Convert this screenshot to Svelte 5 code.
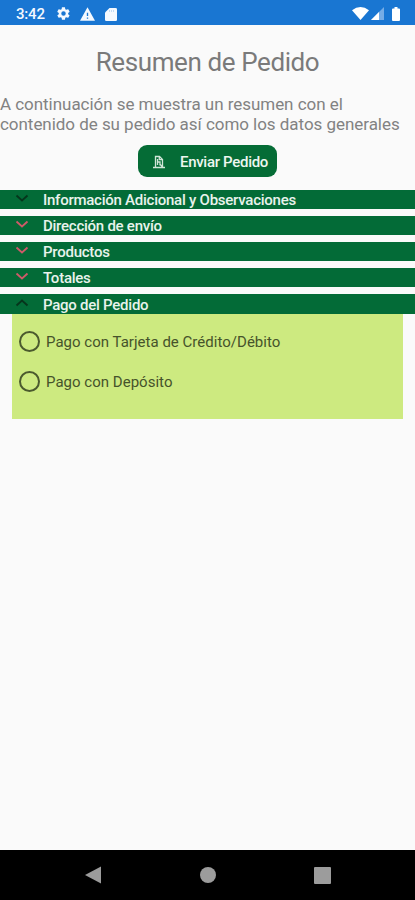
<script lang="ts">
	type Section = { title: string; accent: boolean };

	const sections: Section[] = [
		{ title: 'Información Adicional y Observaciones', accent: false },
		{ title: 'Dirección de envío', accent: true },
		{ title: 'Productos', accent: true },
		{ title: 'Totales', accent: true },
		{ title: 'Pago del Pedido', accent: false }
	];
	const payments = ['Pago con Tarjeta de Crédito/Débito', 'Pago con Depósito'];

	let open = $state(4);
	let selected = $state('');

	function toggle(index: number) {
		open = open === index ? -1 : index;
	}
</script>

<div class="screen">
	<header class="status-bar">
		<span class="clock">3:42</span>
		<svg class="gear" width="15" height="15" viewBox="0 0 24 24" fill="#f4f9ff">
			<path d="M19.4 13a7.5 7.5 0 0 0 0-2l2.1-1.6c.2-.2.3-.5.1-.7l-2-3.4c-.1-.2-.4-.3-.6-.2l-2.5 1a7 7 0 0 0-1.7-1l-.4-2.6c0-.3-.2-.5-.5-.5h-4c-.2 0-.5.2-.5.5L9 5.1a8 8 0 0 0-1.7 1l-2.5-1c-.2-.1-.5 0-.6.2l-2 3.4c-.1.2-.1.5.1.7L4.5 11a8 8 0 0 0 0 2l-2.2 1.6c-.2.2-.2.5-.1.7l2 3.4c.1.2.4.3.6.2l2.5-1c.5.4 1.100.8 1.7 1l.4 2.6c0 .3.3.5.5.5h4c.3 0 .5-.2.5-.5l.4-2.6c.6-.3 1.2-.6 1.7-1l2.5 1c.2.1.5 0 .6-.2l2-3.4c.1-.2.1-.5-.1-.7zM12 15.6a3.6 3.6 0 1 1 0-7.2 3.6 3.6 0 0 1 0 7.2z" />
		</svg>
		<svg class="warning" width="15" height="14" viewBox="0 0 22 20" fill="#f4f9ff">
			<path d="M0 20h22L11 0zM12 17h-2v-2h2zm0-4h-2V8h2z" />
		</svg>
		<svg class="card" width="12" height="14" viewBox="0 0 12 14" fill="#f4f9ff">
			<path d="M4.5 1H10.5Q12 1 12 2.3V12.7Q12 14 10.7 14H1.3Q0 14 0 12.7V5.5z" />
			<path d="M4.5 3v2M6.5 3v2M8.5 3v2" stroke="#b5d3f1" stroke-width=".8" />
		</svg>
		<span class="spacer"></span>
		<svg width="17" height="13" viewBox="0 0 17 13" fill="#fff">
			<path d="M0 3.2Q8.5-3 17 3.2L8.5 13z" />
		</svg>
		<svg class="signal" width="13" height="13" viewBox="0 0 13 13">
			<path d="M13 0v13H0z" fill="#75ace6" />
			<path d="M8 5v8H0z" fill="#fff" />
		</svg>
		<svg class="battery" width="8" height="14" viewBox="0 0 8 14" fill="#fff">
			<path d="M2.5 0h3v1.5H7q1 0 1 1V13q0 1-1 1H1q-1 0-1-1V2.5q0-1 1-1h1.5z" />
		</svg>
	</header>

	<main>
		<h1>Resumen de Pedido</h1>
		<p class="intro">
			A continuación se muestra un resumen con el<br />
			contenido de su pedido así como los datos generales
		</p>

		<button class="send">
			<svg width="14" height="14" viewBox="0 0 14 14" fill="none" stroke="#d0e5d7" stroke-width="1.3">
				<path d="M3.5 12V1.5h4l3 3V12M7.3 1.7v3h3M1 12.5h12M5.5 4v6M5.5 7h2.5v3.5M7.5 8.5l2.5 3" />
			</svg>
			<span>Enviar Pedido</span>
		</button>

		<div class="accordion">
			{#each sections as section, i}
				<button class="bar" onclick={() => toggle(i)}>
					<svg class:accent={section.accent} width="14" height="8" viewBox="0 0 14 8">
						<path d={open === i ? 'M1.5 6.5L7 1.5l5.5 5' : 'M1.5 1.5l5.500 5 5.500-5'} />
					</svg>
					<span class="label">{section.title}</span>
				</button>
			{/each}
			{#if open === 4}
				<div class="panel">
					{#each payments as payment}
						<label>
							<input type="radio" name="payment" value={payment} bind:group={selected} />
							<span>{payment}</span>
						</label>
					{/each}
				</div>
			{/if}
		</div>
	</main>

	<nav class="nav-bar">
		<svg width="16" height="18" viewBox="0 0 16 18"><path d="M16 .5v17L0 9z" /></svg>
		<svg width="16" height="16" viewBox="0 0 16 16"><circle cx="8" cy="8" r="8" /></svg>
		<svg width="17" height="17" viewBox="0 0 17 17"><rect width="17" height="17" rx="1" /></svg>
	</nav>
</div>

<style>
	:global(body) {
		background: #fafafa;
	}
	.screen {
		width: 415px;
		height: 900px;
		display: flex;
		flex-direction: column;
		overflow: hidden;
		background: #fafafa;
		font-family: Roboto, 'Liberation Sans', sans-serif;
	}
	.status-bar {
		height: 25px;
		box-sizing: border-box;
		padding: 2px 15px 0 16px;
		display: flex;
		align-items: center;
		background: #1976d2;
		color: #f4f9ff;
	}
	.clock {
		width: 40px;
		font-size: 15px;
		font-weight: 500;
		letter-spacing: -0.2px;
	}
	.warning {
		margin-left: 9px;
	}
	.card {
		margin-left: 10px;
	}
	.spacer {
		flex: 1;
	}
	.signal {
		margin-left: 2px;
	}
	.battery {
		margin-left: 8px;
	}
	main {
		flex: 1;
		display: flex;
		flex-direction: column;
	}
	h1 {
		margin: 20px 0 0;
		text-align: center;
		font-size: 26px;
		line-height: 34px;
		font-weight: 400;
		letter-spacing: -0.4px;
		color: #7a7a7a;
	}
	.intro {
		margin: 15px 0 0;
		white-space: nowrap;
		font-size: 17px;
		line-height: 20px;
		letter-spacing: -0.04px;
		color: #828282;
	}
	.send {
		align-self: center;
		width: 139px;
		height: 32px;
		margin-top: 11px;
		padding: 1px 0 0 14px;
		display: flex;
		align-items: center;
		gap: 14px;
		border: 0;
		border-radius: 9px;
		background: #056c36;
		color: #eef7f0;
		font: 500 15px Roboto, sans-serif;
		letter-spacing: -0.3px;
		white-space: nowrap;
	}
	.accordion {
		margin-top: 13px;
		display: flex;
		flex-direction: column;
	}
	.bar {
		height: 19px;
		margin-bottom: 7px;
		padding: 0 0 0 15px;
		display: flex;
		align-items: center;
		gap: 14px;
		border: 0;
		background: #036b37;
		color: #e9f3ec;
		font: 500 15px Roboto, sans-serif;
		letter-spacing: -0.25px;
		text-align: left;
	}
	.bar:last-of-type {
		height: 20px;
		margin-bottom: 0;
	}
	.bar svg {
		fill: none;
		stroke: #06351c;
		stroke-width: 1.8;
		margin-bottom: 3px;
	}
	.bar svg.accent {
		stroke: #cf5a69;
	}
	.label {
		line-height: 19px;
		padding-top: 2px;
	}
	.panel {
		height: 105px;
		box-sizing: border-box;
		margin: 0 12px;
		padding: 7px 0 0 7px;
		background: #cdea80;
	}
	label {
		height: 40px;
		display: flex;
		align-items: center;
		gap: 6px;
		font-size: 15px;
		letter-spacing: 0.02px;
		color: #46532b;
	}
	label span {
		padding-top: 2px;
	}
	input {
		appearance: none;
		width: 21px;
		height: 21px;
		margin: 0;
		border: 2px solid #4b5a2e;
		border-radius: 50%;
	}
	input:checked {
		background: radial-gradient(#4b5a2e 45%, transparent 50%);
	}
	.nav-bar {
		height: 50px;
		box-sizing: border-box;
		padding: 0 84px 0 85px;
		display: flex;
		align-items: center;
		justify-content: space-between;
		background: #000;
		fill: #9c9c9c;
	}
</style>
